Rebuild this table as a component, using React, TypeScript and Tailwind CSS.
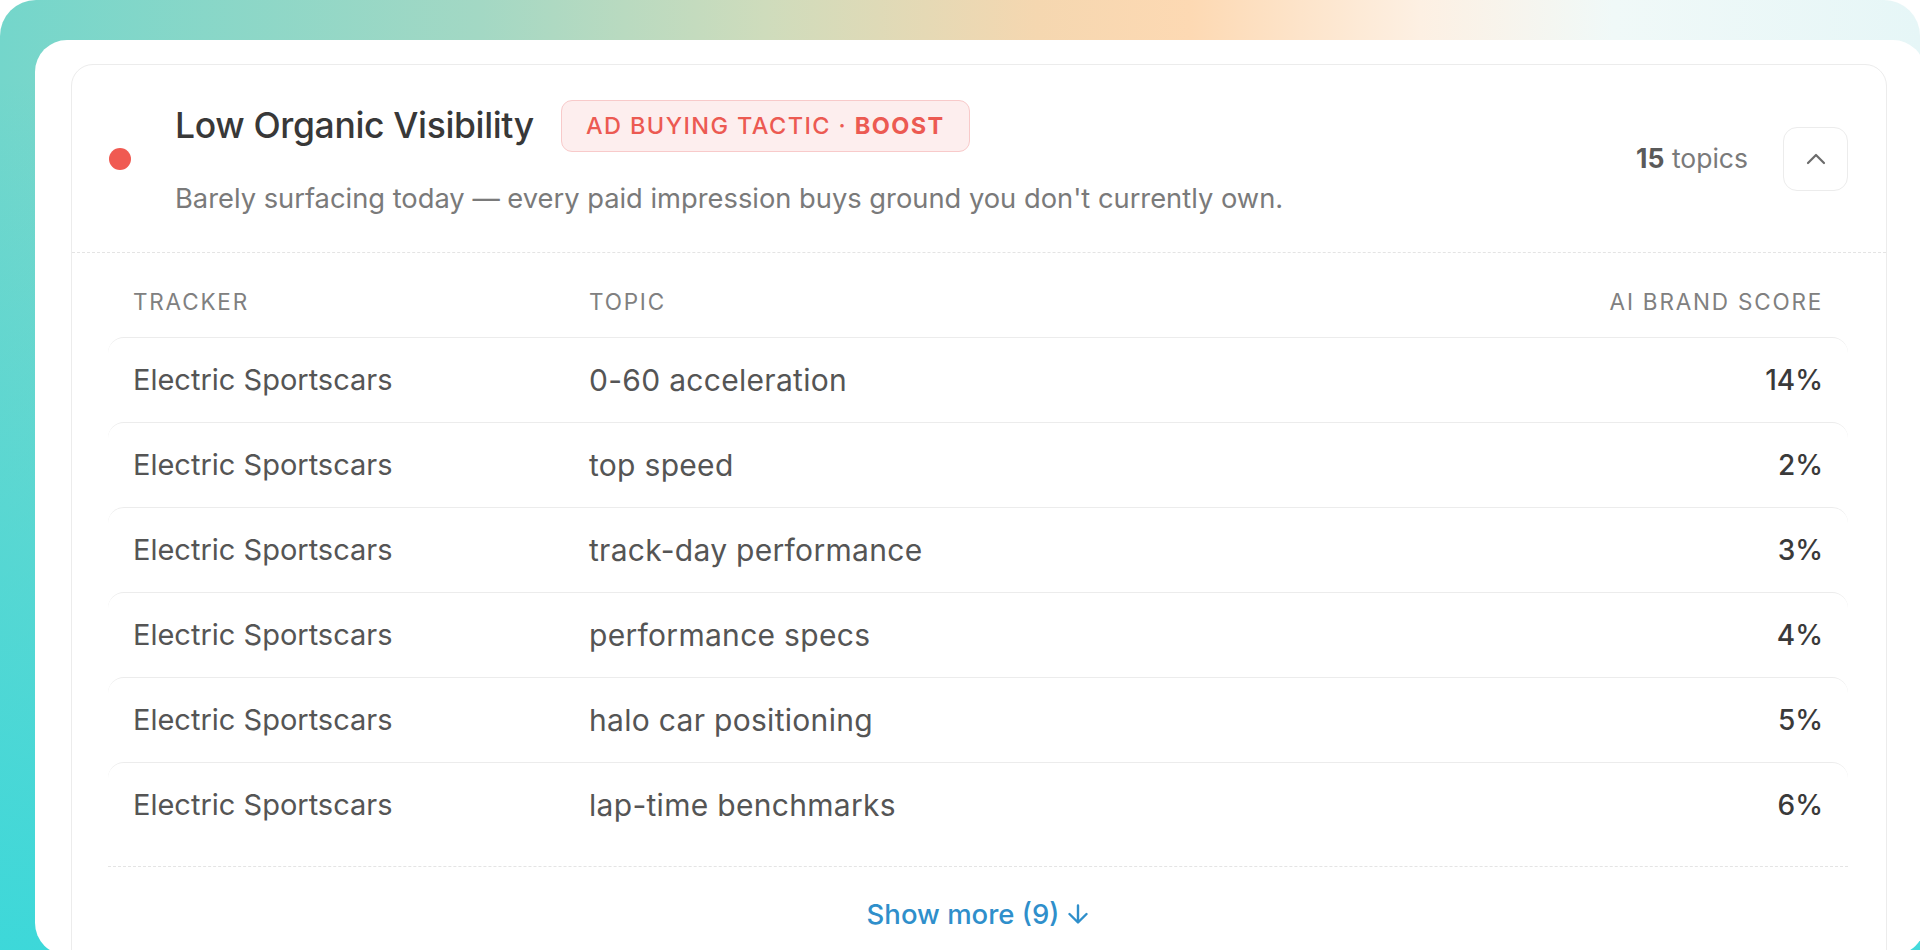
import React from "react";

interface TopicRow {
  tracker: string;
  topic: string;
  score: number;
}

const rows: TopicRow[] = [
  { tracker: "Electric Sportscars", topic: "0-60 acceleration", score: 14 },
  { tracker: "Electric Sportscars", topic: "top speed", score: 2 },
  { tracker: "Electric Sportscars", topic: "track-day performance", score: 3 },
  { tracker: "Electric Sportscars", topic: "performance specs", score: 4 },
  { tracker: "Electric Sportscars", topic: "halo car positioning", score: 5 },
  { tracker: "Electric Sportscars", topic: "lap-time benchmarks", score: 6 },
];

const ChevronUp = () => (
  <svg width="20" height="12" viewBox="0 0 20 12" fill="none">
    <path d="M2 10 L10 2 L18 10" stroke="#6b6b6b" strokeWidth="2.2" strokeLinecap="round" strokeLinejoin="round" />
  </svg>
);

const ArrowDown = () => (
  <svg width="22" height="20" viewBox="0 0 22 20" fill="none">
    <path d="M11 1.5 V18 M2.5 10 L11 18.5 L19.5 10" stroke="#2f8fcb" strokeWidth="2.4" strokeLinecap="round" strokeLinejoin="round" />
  </svg>
);

const App: React.FC = () => {
  return (
    <div className="w-[1920px] h-[950px] overflow-hidden bg-white font-['Inter',sans-serif]">
      <div className="h-[1000px] rounded-[36px] pl-[35px] pt-[40px] bg-[linear-gradient(to_bottom,rgba(58,216,218,0)_8%,#3ad8da_100%),linear-gradient(to_right,#74d6cb_0%,#a3d8c4_25%,#cfdcbc_40%,#f5d7b0_54%,#fdd9b3_62%,#fdf0e3_74%,#f0f9f8_84%,#e6f6f7_100%)]">
        <div className="w-[1890px] h-[915px] rounded-[32px] bg-white pl-[36px] pt-[24px]">
          {/* Segment card */}
          <div className="w-[1816px] h-[960px] rounded-[22px] border border-[#ececec]">
            <div className="h-[187px] flex items-center pl-[37px] pr-[38px]">
              <span className="w-[22px] h-[22px] rounded-full bg-[#f05a52] shrink-0" />
              <div className="ml-[44px] flex-1">
                <div className="flex items-center h-[52px]">
                  <h2 className="text-[35.5px] leading-[44px] text-[#383838] font-medium tracking-[-0.01em]">
                    Low Organic Visibility
                  </h2>
                  <span className="ml-[27px] h-[52px] px-[24px] flex items-center rounded-[11px] border border-[#f8caca] bg-[#fdeeee] text-[#ec5a52] text-[23.5px] tracking-[0.06em] font-medium">
                    AD BUYING TACTIC ·&nbsp;<span className="font-bold">BOOST</span>
                  </span>
                </div>
                <p className="mt-[28px] text-[27.3px] leading-[38px] text-[#7a7a7a]">
                  Barely surfacing today — every paid impression buys ground you don't currently own.
                </p>
              </div>
              <span className="text-[26.5px] text-[#7a7a7a]">
                <span className="font-bold text-[#5a5a5a]">15</span> topics
              </span>
              <button className="ml-[35px] w-[65px] h-[64px] rounded-[14px] border border-[#ececec] flex items-center justify-center">
                <ChevronUp />
              </button>
            </div>

            <div className="border-t border-dashed border-[#e4e4e4]" />

            <div className="pl-[36px] pr-[38px]">
              <div className="h-[84px] pt-[36px] px-[25px] grid grid-cols-[456px_1fr_auto] text-[22.5px] leading-[26px] tracking-[0.08em] text-[#808080]">
                <span>TRACKER</span>
                <span>TOPIC</span>
                <span>AI BRAND SCORE</span>
              </div>
              {rows.map((r, i) => (
                <div
                  key={i}
                  className="h-[85px] px-[25px] grid grid-cols-[456px_1fr_auto] items-center border-t border-[#ececec] rounded-[16px] text-[#555555]"
                >
                  <span className="text-[29px]">{r.tracker}</span>
                  <span className="text-[30px] tracking-[0.01em]">{r.topic}</span>
                  <span className="text-[28px] font-medium text-[#3a3a3a]">{r.score}%</span>
                </div>
              ))}
              <div className="mt-[19px] border-t border-dashed border-[#e4e4e4]" />
              <div className="pt-[30px] flex justify-center">
                <button className="flex items-center gap-[8px] text-[27.5px] leading-[34px] font-medium text-[#2f8fcb]">
                  Show more (9)
                  <ArrowDown />
                </button>
              </div>
            </div>
          </div>
        </div>
      </div>
    </div>
  );
};

export default App;
